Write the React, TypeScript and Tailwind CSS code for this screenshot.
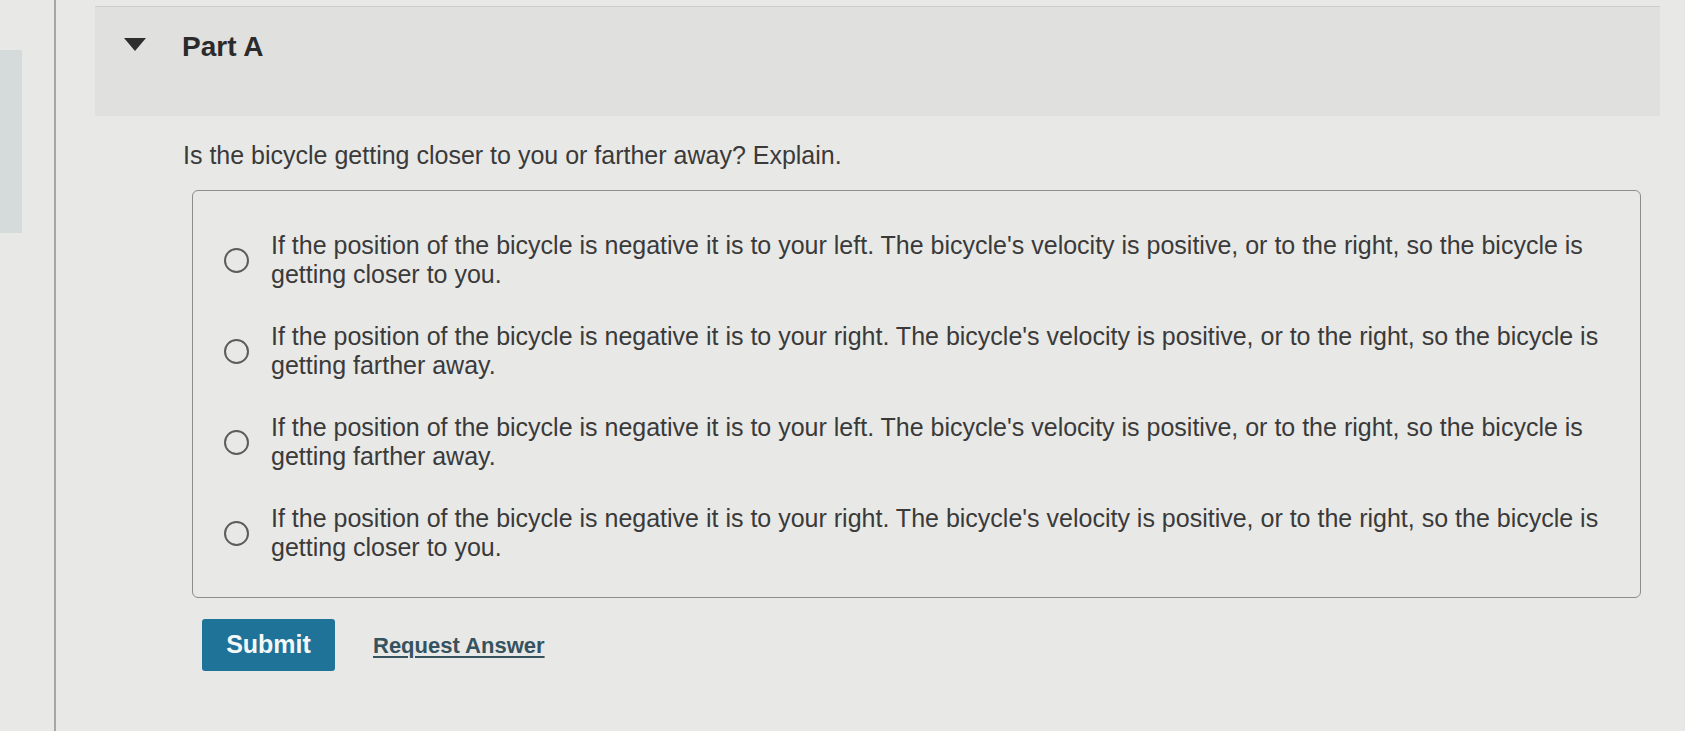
import React from "react";

const options = [
  "If the position of the bicycle is negative it is to your left. The bicycle's velocity is positive, or to the right, so the bicycle is getting closer to you.",
  "If the position of the bicycle is negative it is to your right. The bicycle's velocity is positive, or to the right, so the bicycle is getting farther away.",
  "If the position of the bicycle is negative it is to your left. The bicycle's velocity is positive, or to the right, so the bicycle is getting farther away.",
  "If the position of the bicycle is negative it is to your right. The bicycle's velocity is positive, or to the right, so the bicycle is getting closer to you.",
];

export default function App() {
  return (
    <div className="w-[1685px] h-[731px] overflow-hidden bg-[#e8e8e6] flex font-['Liberation_Sans',Arial,sans-serif] text-[#3a3a3a]">
      {/* left sidebar edge */}
      <div className="w-[56px] shrink-0 border-r-2 border-[#a6a6a4] flex flex-col">
        <div className="mt-[50px] h-[183px] w-[22px] bg-[#d5dbda]" />
      </div>

      <div className="flex-1 flex flex-col">
        {/* Part header band */}
        <div className="ml-[39px] mt-[6px] w-[1565px] h-[110px] bg-[#e0e0de] border-t border-[#cdcdcb] pt-[24px] flex items-start">
          <svg
            width="22"
            height="13"
            viewBox="0 0 22 13"
            className="ml-[29px] mt-[7px] shrink-0"
          >
            <polygon points="0,0 22,0 11,13" fill="#2e2e2e" />
          </svg>
          <div className="ml-[36px] text-[28px] leading-[32px] font-bold text-[#2b2b2b]">
            Part A
          </div>
        </div>

        {/* Question */}
        <div className="ml-[127px] mt-[25px] text-[25px] leading-[29px]">
          Is the bicycle getting closer to you or farther away? Explain.
        </div>

        {/* Options box */}
        <div className="ml-[136px] mt-[20px] w-[1449px] border border-[#8d8d8b] rounded-[6px] pt-[40px] pb-[35px] pl-[31px] flex flex-col gap-[33px]">
          {options.map((t, i) => (
            <div key={i} className="flex items-center gap-[22px]">
              <div className="w-[25px] h-[25px] shrink-0 rounded-full border-2 border-[#5c5c5c]" />
              <div className="w-[1365px] text-[25px] leading-[29px]">{t}</div>
            </div>
          ))}
        </div>

        {/* Actions */}
        <div className="ml-[146px] mt-[21px] flex items-center gap-[38px]">
          <button className="w-[133px] h-[52px] rounded-[3px] bg-[#1f7399] text-[#f4f8f8] text-[25px] font-bold">
            Submit
          </button>
          <span className="text-[22px] font-bold text-[#34535f] underline underline-offset-[3px] decoration-[2px]">
            Request Answer
          </span>
        </div>
      </div>
    </div>
  );
}
